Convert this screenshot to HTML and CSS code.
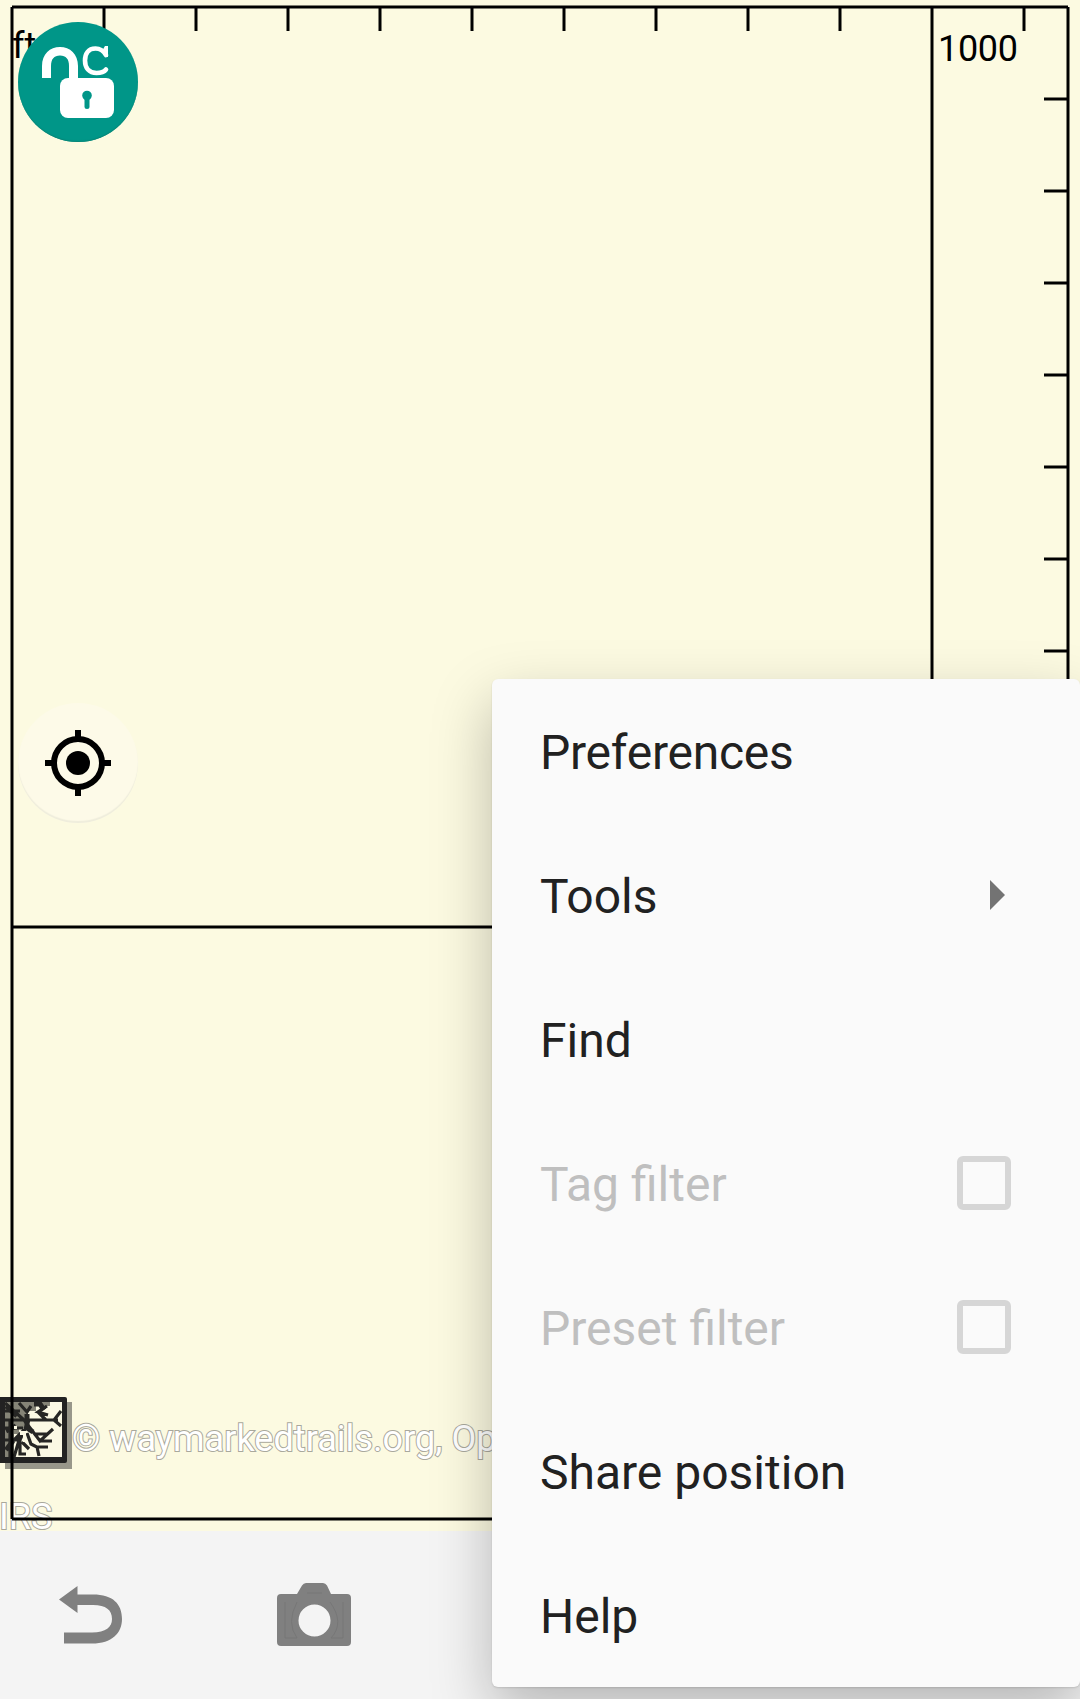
FILE: index.html
```html
<!DOCTYPE html>
<html lang="en">
<head>
<meta charset="utf-8">
<title>Map</title>
<link rel="stylesheet" href="styles.css">
</head>
<body>
<div class="screen">
  <main class="map">
    <svg class="overlay" viewBox="0 0 1080 1531">
      <!-- tile source logo -->
      <path d="M5 1402H72V1469H5Z" fill="#98978a"/>
      <rect x="-3" y="1397" width="70" height="66" rx="2" fill="#222"/>
      <path d="M5 1402H62V1457H5Z" fill="#fbf9e4"/>
      <path d="M5 1402H50V1406H36V1411H28V1428H19V1434H14V1457H5Z" fill="#858477"/>
      <g fill="none" stroke="#262624" stroke-width="3.200">
        <path d="M5 1420H58M61 1411L54 1420L61 1426M5 1403L24 1420M5 1411H20M19 1403L27 1412L31 1406M47 1406L38 1412L48 1415M38 1412L46 1420M10 1420V1457M5 1428H23M5 1440H20L29 1420M24 1430L12 1442M24 1420L40 1441L53 1429M35 1434H48M14 1457L20 1437L20 1454L26 1454M27 1433L31 1444L37 1447L39 1456M37 1447H48M40 1441H52M29 1449L22 1442"/>
        <path d="M6 1406L17 1416M6 1431L16 1426M6 1450L13 1441M34 1404H40L44 1410M27 1414V1428L33 1432" stroke-width="5"/>
      </g>
      <path d="M14 1426H17V1429H14ZM20 1431H26V1442H23V1435H20ZM30 1415H36V1418H30Z" fill="#fbf9e4"/>
      <g class="credit">
        <text x="72" y="1451" textLength="424.500">© waymarkedtrails.org, Op</text>
        <text x="-1" y="1529">IRS</text>
      </g>
      <!-- distance grid -->
      <path class="grid" d="M12 7H1068M12 7V1519M1068 7V1519M12 1519H1068M932 7V1519M12 927H1068
        M104 7V31M196 7V31M288 7V31M380 7V31M472 7V31M564 7V31M656 7V31M748 7V31M840 7V31M1024 7V31
        M1044 99H1068M1044 191H1068M1044 283H1068M1044 375H1068M1044 467H1068M1044 559H1068M1044 651H1068"/>
      <text class="scale" x="12" y="58">ft</text>
      <text class="scale" x="938" y="61" textLength="80">1000</text>
    </svg>
    <button class="fab lock" aria-label="Unlock">
      <svg width="120" height="120" viewBox="0 0 120 120">
        <path d="M24 56V44C24 32 32 25 42 25C52 25 60 32 60 44V57H51V44C51 37 48 33.500 42 33.500C36 33.500 33 37 33 44V56Z" fill="#fff"/>
        <rect x="42" y="56" width="54" height="40" rx="8" fill="#fff"/>
        <path d="M88 33C85 28 81 26.500 77.500 26.500C70 26.500 67 32 67 38.500C67 46 71 51 78.500 51C83 51 86 50 88 47.500" fill="none" stroke="#fff" stroke-width="4.600" stroke-linecap="round"/>
        <path d="M90 24V35H88L84 29L87 24Z" fill="#fff"/>
        <circle cx="69" cy="73.500" r="4.800" fill="#009688"/>
        <path d="M69 74V84.500" stroke="#009688" stroke-width="5" stroke-linecap="round"/>
      </svg>
    </button>
    <button class="fab locate" aria-label="My location">
      <svg width="66" height="66" viewBox="0 0 66 66">
        <circle cx="33" cy="33" r="24" fill="none" stroke="#000" stroke-width="6"/>
        <circle cx="33" cy="33" r="12"/>
        <path d="M30 0H36V9H30ZM30 57H36V66H30ZM0 30H9V36H0ZM57 30H66V36H57Z"/>
      </svg>
    </button>
  </main>
  <footer class="toolbar">
    <svg class="undo" width="63" height="58" viewBox="0 0 63 58">
      <path d="M0 13.500L18.500 0V8.500H34C54 8.500 63 18 63 33C63 47 53 57.500 33 57.500H5V46.500H33C47 46.500 53 41 53 33C53 24 47 19 34 19H18.500V27Z"/>
    </svg>
    <svg class="camera" width="74" height="63" viewBox="0 0 74 63">
      <path fill-rule="evenodd" d="M4 11H20L25 2.500Q26.500 0 29 0H46Q48.500 0 50 2.500L54 11H70Q74 11 74 15V59Q74 63 70 63H4Q0 63 0 59V15Q0 11 4 11ZM37.500 21.500A16 16 0 1 0 37.500 53.500A16 16 0 1 0 37.500 21.500Z"/>
      <path class="detail" d="M8 19V55H20Q9 40 20 19M66 19V55H54Q68 40 53 19M30 10H45"/>
    </svg>
  </footer>
  <nav class="menu">
    <div class="item tight">Preferences</div>
    <div class="item">Tools<span class="arrow"></span></div>
    <div class="item">Find</div>
    <div class="item disabled">Tag filter<span class="box"></span></div>
    <div class="item disabled">Preset filter<span class="box"></span></div>
    <div class="item">Share position</div>
    <div class="item">Help</div>
  </nav>
</div>
</body>
</html>
```
FILE: styles.css
```css
* { box-sizing: border-box; }
body { margin: 0; font-family: Roboto, sans-serif; }
.screen {
  position: relative;
  display: flex;
  flex-direction: column;
  width: 1080px;
  height: 1699px;
  overflow: hidden;
}
.map { position: relative; height: 1531px; background: #fcfae1; }
.overlay { display: block; width: 1080px; height: 1531px; }
.grid { fill: none; stroke: #000; stroke-width: 3; }
.scale { font-size: 36px; fill: #000; }
.credit {
  font-size: 36px;
  fill: #fff;
  stroke: #a9a89c;
  stroke-width: 2px;
  paint-order: stroke;
}
.fab {
  position: absolute;
  left: 18px;
  display: flex;
  align-items: center;
  justify-content: center;
  width: 120px;
  height: 120px;
  padding: 0;
  border: 0;
  border-radius: 50%;
}
.lock { top: 22px; background: #009688; box-shadow: inset 0 -1px 1px #078577; }
.locate { top: 703px; background: #fdfae8; box-shadow: inset 0 -2px 1px #efeddc; }
.toolbar {
  display: flex;
  align-items: flex-start;
  height: 168px;
  padding: 52px 0 0 59px;
  background: #f4f4f4;
  fill: #808080;
}
.undo { margin-top: 3px; }
.camera { margin-left: 155px; }
.detail { fill: none; stroke: #777; stroke-width: 1; }
.menu {
  position: absolute;
  left: 492px;
  top: 679px;
  width: 588px;
  height: 1008px;
  border-radius: 6px;
  background: #fafafa;
  box-shadow: 0 24px 60px rgba(0, 0, 0, .26), 0 1px 2px rgba(0, 0, 0, .12);
}
.item {
  display: flex;
  align-items: center;
  justify-content: space-between;
  height: 144px;
  padding: 3px 69px 0 48px;
  color: #212121;
  font-size: 48px;
}
.tight { letter-spacing: -.25px; }
.disabled { color: #bfbfbf; }
.arrow {
  margin: -3px 6px 0 0;
  border-left: 15px solid #737373;
  border-top: 15px solid transparent;
  border-bottom: 15px solid transparent;
}
.box { width: 54px; height: 54px; margin-top: -4px; border: 6px solid #d6d6d6; border-radius: 6px; }
```
